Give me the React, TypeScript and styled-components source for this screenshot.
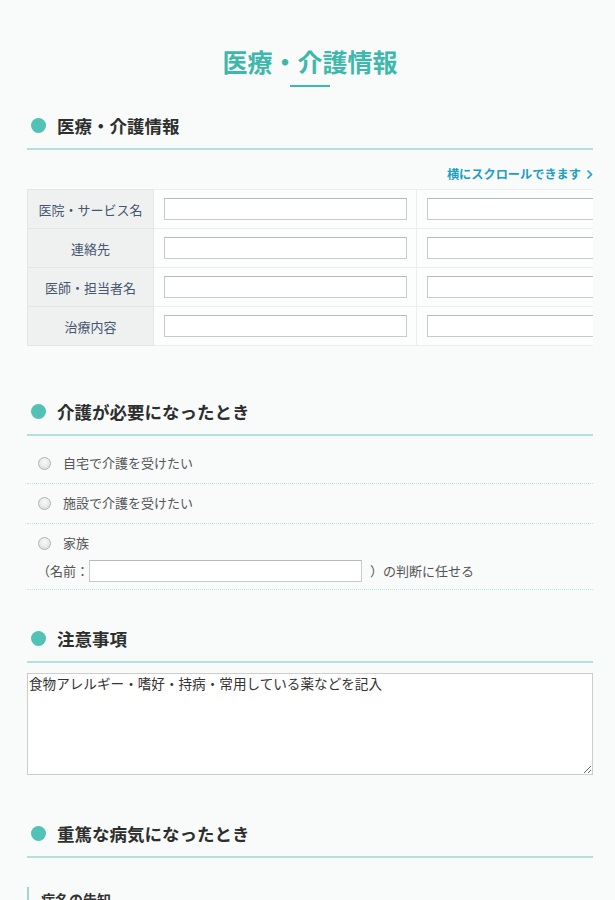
import React from "react";
import styled, { createGlobalStyle } from "styled-components";

const GlobalStyle = createGlobalStyle`
  html {
    scrollbar-width: none;
  }
  html::-webkit-scrollbar {
    display: none;
  }
  body {
    margin: 0;
    background: #f9fafa;
    font-family: "Noto Sans CJK JP", "Noto Sans", sans-serif;
    color: #333;
  }
`;

const providers = ["医院・サービス名", "連絡先", "医師・担当者名", "治療内容"];

const careOptions = ["自宅で介護を受けたい", "施設で介護を受けたい"];

export default function App() {
  return (
    <>
      <GlobalStyle />
      <Page>
        <TitleBlock>
          <PageTitle>医療・介護情報</PageTitle>
          <TitleBar />
        </TitleBlock>

        <Section $space={26}>
          <SectionHeading>
            <Dot />
            医療・介護情報
          </SectionHeading>
          <ScrollNote>
            横にスクロールできます
            <svg width="7" height="11" viewBox="0 0 7 11">
              <path d="M1.5 1.5 L5.5 5.5 L1.5 9.5" fill="none" stroke="#1d9fc1" strokeWidth="1.6" />
            </svg>
          </ScrollNote>
          <ScrollBox>
            <InfoTable>
              <tbody>
                {providers.map((label) => (
                  <tr key={label}>
                    <LabelCell>{label}</LabelCell>
                    <DataCell>
                      <TextInput type="text" />
                    </DataCell>
                    <DataCell>
                      <TextInput type="text" />
                    </DataCell>
                  </tr>
                ))}
              </tbody>
            </InfoTable>
          </ScrollBox>
        </Section>

        <Section $space={53}>
          <SectionHeading>
            <Dot />
            介護が必要になったとき
          </SectionHeading>
          <OptionList>
            {careOptions.map((opt) => (
              <OptionRow key={opt}>
                <OptionLine>
                  <Radio />
                  {opt}
                </OptionLine>
              </OptionRow>
            ))}
            <OptionRow>
              <OptionLine>
                <Radio />
                家族
              </OptionLine>
              <NameLine>
                （名前：
                <NameInput type="text" />
                <After>）の判断に任せる</After>
              </NameLine>
            </OptionRow>
          </OptionList>
        </Section>

        <Section $space={36}>
          <SectionHeading>
            <Dot />
            注意事項
          </SectionHeading>
          <Notes defaultValue="食物アレルギー・嗜好・持病・常用している薬などを記入" />
        </Section>

        <Section $space={46}>
          <SectionHeading>
            <Dot />
            重篤な病気になったとき
          </SectionHeading>
          <SubHeading>病名の告知</SubHeading>
        </Section>
      </Page>
    </>
  );
}

const Page = styled.div`
  margin: 0 22px 0 27px;
  padding-bottom: 40px;
`;

const TitleBlock = styled.div`
  padding-top: 43px;
  display: flex;
  flex-direction: column;
  align-items: center;
`;

const PageTitle = styled.h1`
  margin: 0;
  font-size: 25px;
  line-height: 36px;
  font-weight: 700;
  color: #3fb8ac;
`;

const TitleBar = styled.div`
  width: 40px;
  height: 2px;
  margin-top: 6px;
  background: #3fb8ac;
`;

const Section = styled.section<{ $space: number }>`
  margin-top: ${(p) => p.$space}px;
`;

const SectionHeading = styled.h2`
  margin: 0;
  display: flex;
  align-items: center;
  gap: 11px;
  height: 24px;
  padding-bottom: 11px;
  border-bottom: 2px solid #b5e1dc;
  font-size: 17.5px;
  font-weight: 700;
  color: #2e2e2e;
`;

const Dot = styled.span`
  width: 15px;
  height: 15px;
  margin-left: 4px;
  border-radius: 50%;
  background: #52c1b6;
  flex: none;
`;

const ScrollNote = styled.div`
  margin-top: 15px;
  display: flex;
  justify-content: flex-end;
  align-items: center;
  gap: 5px;
  font-size: 12.2px;
  line-height: 18px;
  font-weight: 700;
  color: #1d9fc1;
`;

const ScrollBox = styled.div`
  margin-top: 6px;
  overflow-x: auto;
  scrollbar-width: none;
  &::-webkit-scrollbar {
    display: none;
  }
`;

const InfoTable = styled.table`
  border-collapse: collapse;
  table-layout: fixed;
  width: 652px;
`;

const LabelCell = styled.th`
  width: 126px;
  height: 39px;
  padding: 0;
  box-sizing: border-box;
  background: #eff1f1;
  border: 1px solid #e3e6e6;
  font-size: 13px;
  font-weight: 400;
  color: #46566f;
  text-align: center;
  white-space: nowrap;
`;

const DataCell = styled.td`
  width: 263px;
  padding: 0 10px;
  box-sizing: border-box;
  background: #fcfdfd;
  border: 1px solid #eceeee;
  border-right: none;
`;

const TextInput = styled.input`
  display: block;
  box-sizing: border-box;
  width: 243px;
  height: 22px;
  margin: 0;
  padding: 0 4px;
  border: 1px solid #cacaca;
  border-top-color: #b9b9b9;
  background: #fff;
  outline: none;
`;

const OptionList = styled.div`
  margin-top: 8px;
`;

const OptionRow = styled.div`
  padding: 9px 0 10px;
  border-bottom: 1px dotted #bfe5e0;
`;

const OptionLine = styled.div`
  display: flex;
  align-items: center;
  gap: 12px;
  padding-left: 11px;
  font-size: 13px;
  line-height: 20px;
  color: #555;
`;

const Radio = styled.span`
  width: 13px;
  height: 13px;
  box-sizing: border-box;
  border-radius: 50%;
  border: 1px solid #b4b4b4;
  background: radial-gradient(circle at 50% 35%, #fafafa 0%, #e6e6e6 60%, #d2d2d2 100%);
  flex: none;
`;

const NameLine = styled.div`
  display: flex;
  align-items: center;
  margin: 7px 0 -3px;
  padding-left: 10px;
  font-size: 13px;
  line-height: 22px;
  color: #555;
`;

const NameInput = styled.input`
  box-sizing: border-box;
  width: 273px;
  height: 22px;
  margin: 0;
  padding: 0 4px;
  border: 1px solid #cacaca;
  border-top-color: #b9b9b9;
  background: #fff;
  outline: none;
`;

const After = styled.span`
  margin-left: 8px;
`;

const Notes = styled.textarea`
  display: block;
  box-sizing: border-box;
  width: 100%;
  height: 102px;
  margin-top: 10px;
  padding: 1px 1px;
  border: 1px solid #cdcdcd;
  background: #fff;
  font-family: "Noto Sans CJK JP", sans-serif;
  font-size: 13.6px;
  line-height: 17px;
  color: #333;
  outline: none;
`;

const SubHeading = styled.h3`
  margin: 29px 0 0;
  padding-left: 12px;
  border-left: 2px solid #9fd8d2;
  font-size: 14px;
  line-height: 24px;
  font-weight: 700;
  color: #333;
`;
